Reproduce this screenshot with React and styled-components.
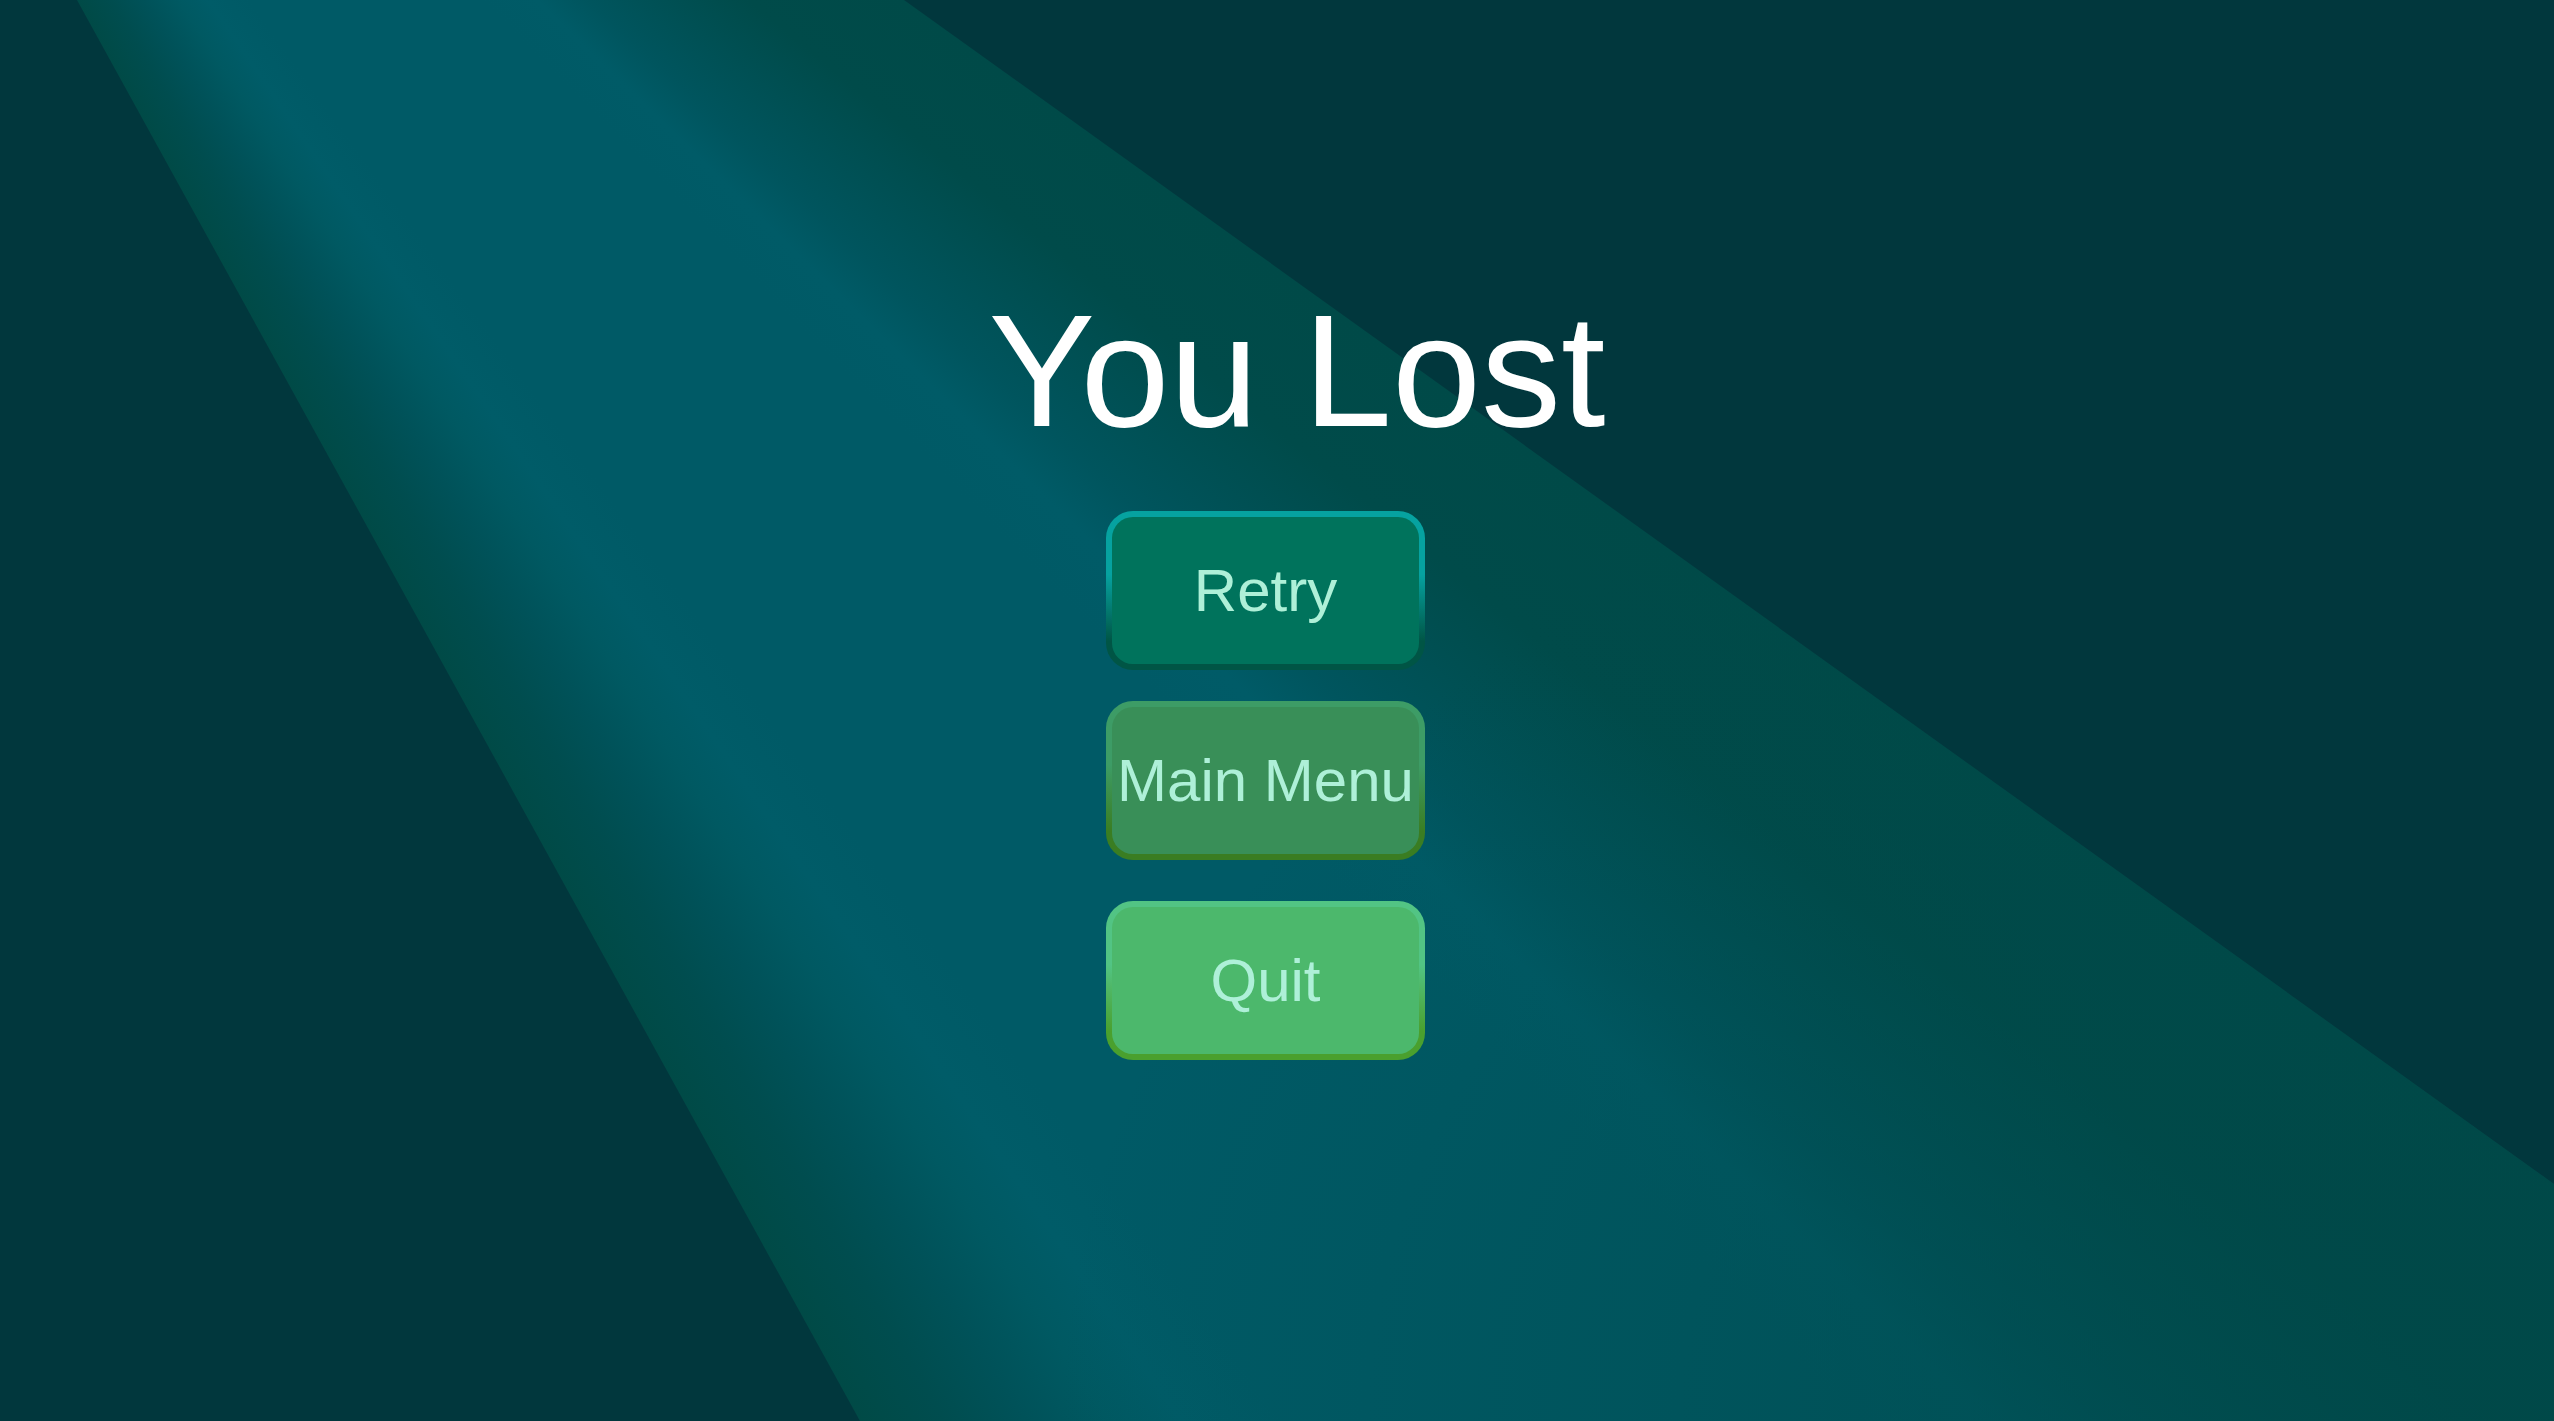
import React from "react";
import styled, { createGlobalStyle } from "styled-components";

const GlobalStyle = createGlobalStyle`
  html, body {
    margin: 0;
    padding: 0;
    background: #01373d;
  }
  body {
    font-family: "Liberation Sans", Arial, sans-serif;
    overflow: hidden;
  }
`;

const Screen = styled.main`
  position: relative;
  width: 100vw;
  height: 100vh;
  overflow: hidden;
  background: #01373d;
`;

/* decorative light beam drawn behind the menu */
const Spotlight = styled.div`
  position: absolute;
  inset: 0;
  clip-path: polygon(77px 0, 904px 0, 2554px 1184px, 2554px 1421px, 860px 1421px);
  background:
    radial-gradient(
      ellipse 1500px 1100px at 2554px 1421px,
      rgba(0, 72, 72, 0.85) 0%,
      rgba(0, 72, 72, 0.4) 50%,
      rgba(0, 72, 72, 0) 100%
    ),
    conic-gradient(
      from 0deg at -464px -981px,
      #004a48 0deg,
      #004a48 125.6deg,
      #004b4a 129deg,
      #00555e 133deg,
      #005b67 134.4deg,
      #005a66 136deg,
      #005a66 144deg,
      #005c68 145.6deg,
      #005962 146.8deg,
      #005259 148.2deg,
      #004d4f 149.6deg,
      #004a46 151.2deg,
      #004a46 360deg
    );
`;

const Menu = styled.section`
  position: relative;
  z-index: 1;
  display: flex;
  flex-direction: column;
  align-items: center;
  padding-top: 291px;
`;

const Title = styled.h1`
  margin: 0 0 60px 40px;
  font-family: "Liberation Sans", Arial, sans-serif;
  font-size: 160px;
  font-weight: 400;
  line-height: 1;
  color: #ffffff;
`;

const ButtonStack = styled.nav`
  display: flex;
  flex-direction: column;
  gap: 31px;
  margin-right: 23px;
`;

const MenuButton = styled.button`
  box-sizing: border-box;
  width: 319px;
  height: 159px;
  margin-top: ${(p) => p.$offset || 0}px;
  padding: 0;
  display: flex;
  align-items: center;
  justify-content: center;
  border: 6px solid transparent;
  border-radius: 27px;
  background:
    linear-gradient(${(p) => p.$fill}, ${(p) => p.$fill}) padding-box,
    linear-gradient(180deg, ${(p) => p.$top} 0%, ${(p) => p.$top} 40%, ${(p) => p.$bottom} 82%, ${(p) => p.$bottom} 100%) border-box;
  color: #aef0d8;
  font-family: "Liberation Sans", Arial, sans-serif;
  font-size: 60px;
  line-height: 1;
  white-space: nowrap;
  cursor: pointer;
`;

const buttons = [
  { label: "Retry", fill: "#00735c", top: "#06a2a0", bottom: "#005545", offset: 0 },
  { label: "Main Menu", fill: "#398f58", top: "#3d9c66", bottom: "#3a7d22", offset: 0 },
  { label: "Quit", fill: "#4cb86c", top: "#52c484", bottom: "#4aa02e", offset: 10 },
];

export default function App() {
  return (
    <>
      <GlobalStyle />
      <Screen>
        <Spotlight />
        <Menu>
          <Title>You Lost</Title>
          <ButtonStack>
            {buttons.map((b) => (
              <MenuButton
                key={b.label}
                type="button"
                $fill={b.fill}
                $top={b.top}
                $bottom={b.bottom}
                $offset={b.offset}
              >
                {b.label}
              </MenuButton>
            ))}
          </ButtonStack>
        </Menu>
      </Screen>
    </>
  );
}
